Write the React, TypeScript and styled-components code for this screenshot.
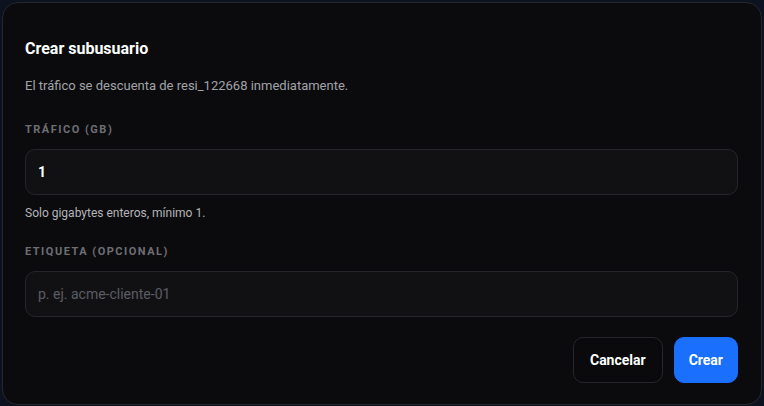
import React from "react";
import styled, { createGlobalStyle } from "styled-components";

const Global = createGlobalStyle`
  html, body { margin: 0; padding: 0; background: #0d1220; }
  body { font-family: Roboto, "Liberation Sans", sans-serif; -webkit-font-smoothing: antialiased; }
  * { box-sizing: border-box; }
`;

const Page = styled.div`
  width: 764px;
  height: 406px;
  padding: 2px 2px 1px 2px;
  display: flex;
`;

const Dialog = styled.div`
  flex: 1;
  background: #0b0b0d;
  border: 1px solid #25272d;
  border-radius: 16px;
  padding: 34px 23px 21px 22px;
  display: flex;
  flex-direction: column;
`;

const Title = styled.h2`
  margin: 0;
  font-size: 16px;
  line-height: 24px;
  font-weight: 700;
  color: #ffffff;
`;

const Description = styled.p`
  margin: 15px 0 0;
  font-size: 13px;
  line-height: 20px;
  color: #a2a3a9;
`;

const Label = styled.label<{ $top: number }>`
  display: block;
  margin-top: ${(p) => p.$top}px;
  font-size: 11px;
  line-height: 14px;
  font-weight: 700;
  letter-spacing: 1.5px;
  color: #6e6f75;
  text-transform: uppercase;
`;

const Input = styled.input`
  margin-top: 12px;
  width: 100%;
  height: 46px;
  background: #111114;
  border: 1px solid #25262b;
  border-radius: 10px;
  padding: 0 12px;
  font-family: inherit;
  font-size: 14px;
  color: #ffffff;
  font-weight: 700;
  outline: none;
  &::placeholder {
    color: #5c5d63;
    font-weight: 400;
  }
`;

const Hint = styled.div`
  margin-top: 9px;
  font-size: 12px;
  line-height: 18px;
  color: #b4b5ba;
`;

const Actions = styled.div`
  margin-top: auto;
  display: flex;
  justify-content: flex-end;
  gap: 11px;
`;

const Button = styled.button<{ $primary?: boolean }>`
  height: 46px;
  padding: 0 ${(p) => (p.$primary ? 14 : 16)}px;
  border-radius: 10px;
  font-family: inherit;
  font-size: 14px;
  font-weight: 700;
  color: #ffffff;
  cursor: pointer;
  border: 1px solid ${(p) => (p.$primary ? "#1a6ffd" : "#26272c")};
  background: ${(p) => (p.$primary ? "#1a6ffd" : "#0a0a0c")};
`;

export default function App() {
  return (
    <>
      <Global />
      <Page>
        <Dialog>
          <Title>Crear subusuario</Title>
          <Description>El tráfico se descuenta de resi_122668 inmediatamente.</Description>
          <Label $top={27}>Tráfico (GB)</Label>
          <Input defaultValue="1" />
          <Hint>Solo gigabytes enteros, mínimo 1.</Hint>
          <Label $top={23}>Etiqueta (opcional)</Label>
          <Input placeholder="p. ej. acme-cliente-01" />
          <Actions>
            <Button>Cancelar</Button>
            <Button $primary>Crear</Button>
          </Actions>
        </Dialog>
      </Page>
    </>
  );
}
